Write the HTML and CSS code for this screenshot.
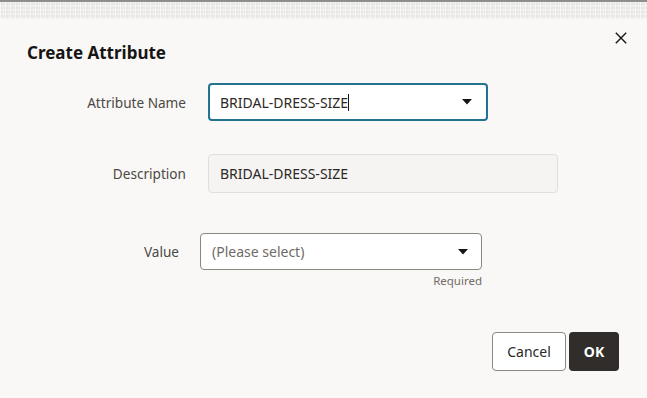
FILE: index.html
```html
<!DOCTYPE html>
<html>
<head>
<meta charset="utf-8">
<link rel="stylesheet" href="styles.css">
</head>
<body>
<div class="topbar"></div>
<div class="dialog">
  <div class="header">
    <h1 class="title">Create Attribute</h1>
    <button class="close" aria-label="Close">
      <svg width="12" height="12" viewBox="0 0 12 12"><path d="M0.8 0.8 L11.2 11.2 M11.2 0.8 L0.8 11.2" stroke="#161513" stroke-width="1.4" fill="none"/></svg>
    </button>
  </div>
  <div class="form">
    <label class="label">Attribute Name</label>
    <div class="field focused">
      <span class="value">BRIDAL-DRESS-SIZE<span class="caret"></span></span>
      <svg class="arrow" width="10" height="6" viewBox="0 0 10 6"><path d="M0 0 H10 L5 5.5 Z" fill="#161513"/></svg>
    </div>
    <label class="label">Description</label>
    <div class="field readonly">
      <span class="value">BRIDAL-DRESS-SIZE</span>
    </div>
  </div>
  <div class="form form2">
    <label class="label">Value</label>
    <div class="fieldwrap">
      <div class="field select">
        <span class="placeholder">(Please select)</span>
        <svg class="arrow" width="10" height="6" viewBox="0 0 10 6"><path d="M0 0 H10 L5 5.5 Z" fill="#161513"/></svg>
      </div>
      <div class="help">Required</div>
    </div>
  </div>
  <div class="footer">
    <button class="btn cancel">Cancel</button>
    <button class="btn ok">OK</button>
  </div>
</div>
</body>
</html>
```
FILE: styles.css
```css
html, body {
  margin: 0;
  padding: 0;
  background: #f9f8f6;
  font-family: "Noto Sans", "Open Sans", sans-serif;
  color: #161513;
}
.topbar {
  height: 17px;
  border-top: 2px solid #8e8e8e;
  background-color: #e6e5e3;
  background-image:
    repeating-linear-gradient(90deg, rgba(255,255,255,0.6) 0 1px, transparent 1px 3px, rgba(255,255,255,0.3) 3px 4px, transparent 4px 5px),
    repeating-linear-gradient(0deg, rgba(255,255,255,0.35) 0 2px, transparent 2px 4px);
}
.dialog {
  width: 647px;
  box-sizing: border-box;
  padding: 0 28px 0 27px;
}
.header {
  display: flex;
  justify-content: space-between;
  align-items: flex-start;
  height: 64px;
}
.title {
  margin: 0;
  padding-top: 22px;
  font-size: 17px;
  font-weight: 700;
  line-height: 24px;
  color: #161513;
}
.close {
  margin-top: 13px;
  margin-right: -8px;
  width: 12px;
  height: 12px;
  padding: 0;
  border: 0;
  background: none;
  display: flex;
}
.form {
  display: grid;
  grid-template-columns: 159px auto;
  column-gap: 22px;
  row-gap: 33px;
  align-items: center;
  justify-items: start;
}
.label {
  justify-self: end;
  font-size: 13.6px;
  color: #4c4844;
}
.field {
  box-sizing: border-box;
  height: 38px;
  width: 280px;
  border-radius: 4px;
  display: flex;
  align-items: center;
  padding: 0 13px 0 11px;
  font-size: 14px;
  color: #2b2825;
  background: #fff;
}
.focused {
  border: 2px solid #227290;
  padding-left: 10px;
  padding-right: 14px;
}
.readonly {
  border: 1px solid #e1dfdc;
  background: #f5f4f2;
  height: 39px;
  width: 350px;
}
.value {
  flex: 1;
  display: flex;
  align-items: center;
}
.caret {
  display: inline-block;
  width: 1px;
  height: 17px;
  background: #161513;
}
.arrow {
  flex: none;
}
.form2 {
  margin-top: 40px;
  grid-template-columns: 152px auto;
  column-gap: 21px;
  align-items: start;
}
.form2 .label {
  margin-top: 9px;
}
.fieldwrap {
  display: flex;
  flex-direction: column;
  align-items: flex-end;
}
.select {
  width: 282px;
  height: 37px;
  border: 1px solid #8b8783;
  padding: 0 13px 0 11px;
}
.placeholder {
  flex: 1;
  color: #6f6b67;
}
.help {
  font-size: 11.5px;
  color: #706c68;
  margin-top: 3px;
  line-height: 16px;
}
.footer {
  display: flex;
  justify-content: flex-end;
  gap: 3px;
  margin-top: 43px;
}
.btn {
  box-sizing: border-box;
  height: 39px;
  border-radius: 4px;
  font-family: "Noto Sans", "Open Sans", sans-serif;
  font-size: 14px;
  padding: 0;
}
.cancel {
  width: 74px;
  border: 1px solid #8b8783;
  background: #fff;
  color: #2b2825;
}
.ok {
  width: 50px;
  border: 0;
  background: #312d2a;
  color: #fff;
  font-weight: 700;
}
```
